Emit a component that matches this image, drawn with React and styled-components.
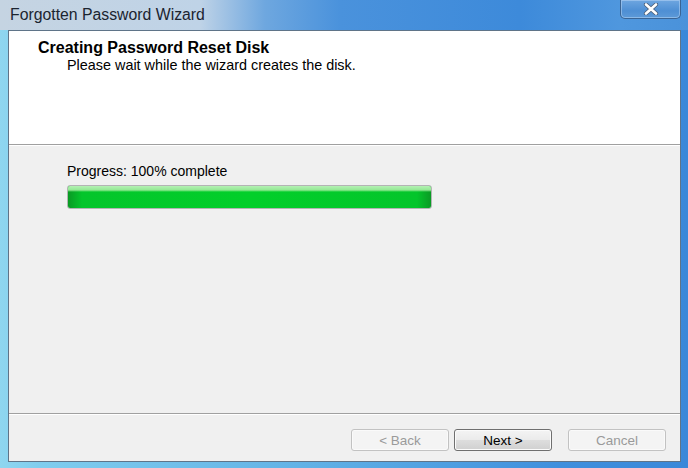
import React from 'react';
import styled, { createGlobalStyle } from 'styled-components';

const GlobalStyle = createGlobalStyle`
  html, body {
    margin: 0;
    padding: 0;
    overflow: hidden;
    background: #3f8ad9;
  }
  body {
    font-family: "Liberation Sans", Arial, sans-serif;
  }
`;

const App = () => {
  return (
    <>
      <GlobalStyle />
      <Window>
        <TitleBar>
          <Title>Forgotten Password Wizard</Title>
          <CloseButton aria-label="Close">
            <svg width="16" height="12" viewBox="0 0 16 12">
              <path
                d="M3 1.5 L13 10.5 M13 1.5 L3 10.5"
                stroke="#4a5e78"
                strokeWidth="4.2"
                strokeLinecap="round"
              />
              <path
                d="M3 1.5 L13 10.5 M13 1.5 L3 10.5"
                stroke="#ffffff"
                strokeWidth="2.6"
                strokeLinecap="round"
              />
            </svg>
          </CloseButton>
        </TitleBar>
        <Frame>
          <Client>
            <Header>
              <HeaderTitle>Creating Password Reset Disk</HeaderTitle>
              <HeaderSubtitle>Please wait while the wizard creates the disk.</HeaderSubtitle>
            </Header>
            <Separator />
            <Content>
              <ProgressLabel>Progress: 100% complete</ProgressLabel>
              <ProgressTrack>
                <ProgressFill style={{ width: '100%' }} />
              </ProgressTrack>
            </Content>
            <Separator />
            <Footer>
              <WizardButton disabled>&lt; Back</WizardButton>
              <WizardButton $primary>Next &gt;</WizardButton>
              <WizardButton disabled $gap>Cancel</WizardButton>
            </Footer>
          </Client>
        </Frame>
      </Window>
    </>
  );
};

export default App;

// Styled Components
const Window = styled.div`
  width: 688px;
  height: 468px;
  display: flex;
  flex-direction: column;
  background:
    linear-gradient(to right, #8fd6f0 0px, #7fcdee 40px, #62b2e6 300px, #3f8fdd 560px, #3a88d9 100%);
`;

const TitleBar = styled.div`
  height: 30px;
  display: flex;
  align-items: flex-start;
  justify-content: space-between;
  background: linear-gradient(
    to right,
    #c5d4e2 0px,
    #bfd3e7 200px,
    #6ea7df 265px,
    #4a92dc 340px,
    #3d8ada 520px,
    #4f97de 620px,
    #4a92da 100%
  );
`;

const Title = styled.div`
  margin: 6px 0 0 10px;
  font-size: 15.8px;
  color: #1b2430;
`;

const CloseButton = styled.div`
  width: 61px;
  height: 19px;
  margin-right: 7px;
  display: flex;
  align-items: center;
  justify-content: center;
  box-sizing: border-box;
  border: 1px solid #3a6494;
  border-top: none;
  border-radius: 0 0 5px 5px;
  background: linear-gradient(to bottom, #6ea6e0, #4e8fd4 60%, #5d9ad8);
  box-shadow: inset 0 0 0 1px rgba(200, 225, 250, 0.45);
`;

const Frame = styled.div`
  flex: 1;
  display: flex;
  padding: 0 7px 6px 8px;
`;

const Client = styled.div`
  flex: 1;
  display: flex;
  flex-direction: column;
  background: #f0f0f0;
  border: 1px solid #5f7488;
`;

const Header = styled.div`
  height: 113px;
  background: #ffffff;
  padding: 8px 0 0 29px;
  box-sizing: border-box;
`;

const HeaderTitle = styled.div`
  font-size: 16px;
  font-weight: bold;
  color: #000;
  line-height: 18px;
`;

const HeaderSubtitle = styled.div`
  font-size: 14.4px;
  color: #000;
  line-height: 17px;
  padding-left: 29px;
`;

const Separator = styled.div`
  height: 1px;
  background: #a0a0a0;
  border-bottom: 1px solid #ffffff;
`;

const Content = styled.div`
  flex: 1;
  padding: 17px 0 0 58px;
`;

const ProgressLabel = styled.div`
  font-size: 14px;
  color: #000;
  line-height: 17px;
  margin-bottom: 5px;
`;

const ProgressTrack = styled.div`
  width: 365px;
  height: 24px;
  box-sizing: border-box;
  border: 1px solid #b4b4b4;
  border-radius: 3px;
  background: #e6e6e6;
  overflow: hidden;
`;

const ProgressFill = styled.div`
  height: 100%;
  background:
    linear-gradient(to bottom, #b4f1b4 0px, #94e994 4px, rgba(0, 0, 0, 0) 6px),
    linear-gradient(to right, #0a9a24 0px, #04c52b 14px, #02cf2a 50%, #04c52b calc(100% - 14px), #0a9a24 100%);
`;

const Footer = styled.div`
  height: 46px;
  display: flex;
  align-items: flex-start;
  justify-content: flex-end;
  padding: 14px 14px 0 0;
  box-sizing: border-box;
  gap: 5px;
`;

const WizardButton = styled.button`
  width: 98px;
  height: 22px;
  margin-left: ${(p) => (p.$gap ? '11px' : '0')};
  box-sizing: border-box;
  font-family: "Liberation Sans", Arial, sans-serif;
  font-size: 13.5px;
  border-radius: 3px;
  padding: 0;
  color: ${(p) => (p.$primary ? '#000' : '#9a9a9a')};
  border: 1px solid ${(p) => (p.$primary ? '#6f6f6f' : '#c2c2c2')};
  background: ${(p) =>
    p.$primary
      ? 'linear-gradient(to bottom, #f4f4f4 0%, #ebebeb 48%, #dddddd 52%, #d0d0d0 100%)'
      : '#f4f4f4'};
  box-shadow: inset 0 0 0 1px ${(p) => (p.$primary ? '#fbfbfb' : '#fafafa')};
`;
